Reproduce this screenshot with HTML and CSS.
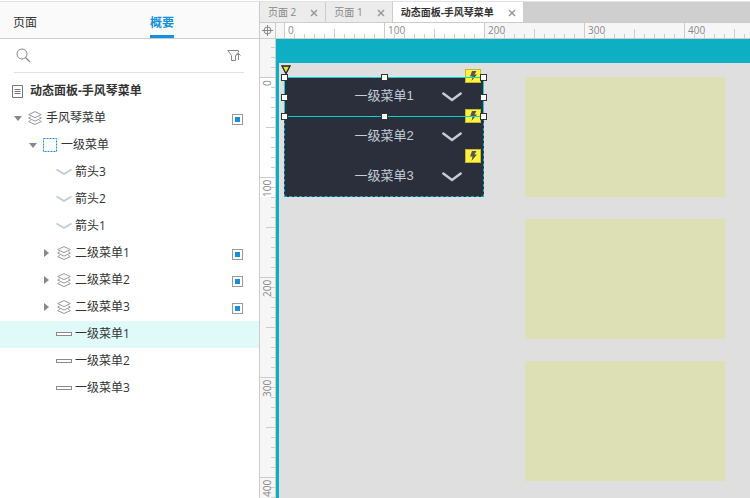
FILE: index.html
```html
<!DOCTYPE html>
<html lang="zh-CN">
  <head>
    <meta charset="UTF-8" />
    <title>动态面板-手风琴菜单</title>
    <link rel="stylesheet" href="styles.css">
  </head>
  <body>
    <!-- shared icons -->
    <svg class="sprite" width="0" height="0">
      <symbol id="layers" viewBox="0 0 14 14">
        <path d="M7 .6 13.300 3.600 7 6.600.7 3.600ZM2.700 5.900.7 7.100 7 10.100l6.300-3-2-1.200M2.700 9.400l-2 1.200L7 13.500l6.300-2.900-2-1.200" fill="none" stroke="#999" />
      </symbol>
      <symbol id="arrow" viewBox="0 0 16 8">
        <path d="M.5 1.500 8 6l7.500-4.500" fill="none" stroke="#bccadb" stroke-width="1.800" />
      </symbol>
      <symbol id="chevron" viewBox="0 0 20 10">
        <path d="M1.300 1.500 10 8l8.700-6.500" fill="none" stroke="#c3ccd9" stroke-width="2.400" stroke-linecap="round" />
      </symbol>
      <symbol id="close" viewBox="0 0 8 8">
        <path d="m1 1 6 6M7 1 1 7" fill="none" stroke="#999" stroke-width="1.500" />
      </symbol>
      <symbol id="bolt" viewBox="0 0 14 12">
        <path d="M6 1h4.500L8.500 4.500H11L5.500 11l1-4.500H4Z" fill="#555" />
      </symbol>
    </svg>

    <aside class="sidebar">
      <nav class="panel-tabs">
        <button class="panel-tab">页面</button>
        <button class="panel-tab active">概要</button>
      </nav>
      <div class="search">
        <label for="buscar" class="search-icon" aria-label="搜索">
          <svg width="16" height="16" viewBox="0 0 16 16"><circle cx="6" cy="6" r="5" fill="none" stroke="#888" /><path d="m9.500 9.500 4.500 4.500" stroke="#888" stroke-width="1.200" /></svg>
        </label>
        <input type="text" id="buscar" class="search-input">
        <button class="filter" aria-label="筛选">
          <svg width="15" height="13" viewBox="0 0 15 13"><path d="M11.500 3V1.500H.8L4.500 6.500v5h4v-5L11.500 3M11.500 11V4.500M9.500 6.500l2-2 2 2" fill="none" stroke="#888" /></svg>
        </button>
      </div>
      <ul class="tree">
        <li class="row root">
          <svg width="11" height="13" viewBox="0 0 11 13"><path d="M.5.5h10v12H.5ZM2.500 4.500h6M2.500 6.500h6M2.500 8.500h6" fill="none" stroke="#777" /></svg>
          <span>动态面板-手风琴菜单</span>
        </li>
        <li class="row level1">
          <i class="caret open"></i>
          <svg class="icon" width="14" height="14"><use href="#layers" /></svg>
          <span>手风琴菜单</span>
          <input type="checkbox" class="visible" aria-label="手风琴菜单" checked>
        </li>
        <li class="row level2">
          <i class="caret open"></i>
          <svg class="icon" width="14" height="14" viewBox="0 0 14 14"><rect x=".5" y=".5" width="13" height="13" fill="none" stroke="#1a8fdc" stroke-dasharray="2 1" /></svg>
          <span>一级菜单</span>
        </li>
        <li class="row leaf"><svg class="shape" width="16" height="8"><use href="#arrow" /></svg><span>箭头3</span></li>
        <li class="row leaf"><svg class="shape" width="16" height="8"><use href="#arrow" /></svg><span>箭头2</span></li>
        <li class="row leaf"><svg class="shape" width="16" height="8"><use href="#arrow" /></svg><span>箭头1</span></li>
        <li class="row level3">
          <i class="caret"></i>
          <svg class="icon" width="14" height="14"><use href="#layers" /></svg>
          <span>二级菜单1</span>
          <input type="checkbox" class="visible" aria-label="二级菜单1" checked>
        </li>
        <li class="row level3">
          <i class="caret"></i>
          <svg class="icon" width="14" height="14"><use href="#layers" /></svg>
          <span>二级菜单2</span>
          <input type="checkbox" class="visible" aria-label="二级菜单2" checked>
        </li>
        <li class="row level3">
          <i class="caret"></i>
          <svg class="icon" width="14" height="14"><use href="#layers" /></svg>
          <span>二级菜单3</span>
          <input type="checkbox" class="visible" aria-label="二级菜单3" checked>
        </li>
        <li class="row leaf selected"><i class="bar"></i><span>一级菜单1</span></li>
        <li class="row leaf"><i class="bar"></i><span>一级菜单2</span></li>
        <li class="row leaf"><i class="bar"></i><span>一级菜单3</span></li>
      </ul>
    </aside>

    <main class="editor">
      <div class="tabs">
        <div class="tab"><button class="tab-name">页面 2</button><button class="tab-close" aria-label="关闭"><svg width="8" height="8"><use href="#close" /></svg></button></div>
        <div class="tab"><button class="tab-name">页面 1</button><button class="tab-close" aria-label="关闭"><svg width="8" height="8"><use href="#close" /></svg></button></div>
        <div class="tab current"><button class="tab-name">动态面板-手风琴菜单</button><button class="tab-close" aria-label="关闭"><svg width="8" height="8"><use href="#close" /></svg></button></div>
      </div>
      <div class="workspace">
        <div class="corner">
          <svg width="11" height="11" viewBox="0 0 11 11"><circle cx="5.500" cy="5.500" r="3.500" fill="none" stroke="#888" /><path d="M5.500 0v11M0 5.500h11" stroke="#888" /></svg>
        </div>
        <div class="ruler-x">
          <span>0</span><span>100</span><span>200</span><span>300</span><span>400</span>
        </div>
        <div class="ruler-y">
          <span>0</span><span>100</span><span>200</span><span>300</span><span>400</span>
        </div>
        <div class="canvas">
          <div class="menu">
            <div class="item">一级菜单1<svg class="chevron" width="20" height="10"><use href="#chevron" /></svg><b class="event"><svg width="14" height="12"><use href="#bolt" /></svg></b></div>
            <div class="item">一级菜单2<svg class="chevron" width="20" height="10"><use href="#chevron" /></svg><b class="event"><svg width="14" height="12"><use href="#bolt" /></svg></b></div>
            <div class="item">一级菜单3<svg class="chevron" width="20" height="10"><use href="#chevron" /></svg><b class="event"><svg width="14" height="12"><use href="#bolt" /></svg></b></div>
            <svg class="marker" width="10" height="10" viewBox="0 0 10 10"><path d="M1 1h8L5 8.500Z" fill="#e6df36" stroke="#222" stroke-width="1.300" /></svg>
            <div class="selection">
              <i class="handle n w"></i><i class="handle n"></i><i class="handle n e"></i>
              <i class="handle w"></i><i class="handle e"></i>
              <i class="handle s w"></i><i class="handle s"></i><i class="handle s e"></i>
            </div>
          </div>
          <div class="states">
            <div class="state"></div>
            <div class="state"></div>
            <div class="state"></div>
          </div>
        </div>
      </div>
    </main>
  </body>
</html>
```
FILE: styles.css
```css
* {
  box-sizing: border-box;
}

body {
  margin: 0;
  height: 100vh;
  display: flex;
  overflow: hidden;
  background-color: #fff;
  color: #333;
  font-family: "Open Sans", "Noto Sans CJK SC", sans-serif;
  font-size: 12px;
  line-height: 18px;
}

button {
  margin: 0;
  padding: 0;
  border: 0;
  background: none;
  color: inherit;
  font: inherit;
}

svg {
  display: block;
  flex: none;
}

.sprite {
  position: absolute;
}

/* left panel */

.sidebar {
  flex: 0 0 260px;
  margin-top: 1px;
  border-top: 1px solid #e2e2e2;
  border-right: 1px solid #ccc;
}

.panel-tabs {
  display: flex;
  justify-content: space-between;
  height: 37px;
  padding: 0 85px 0 13px;
  background-color: #fafafa;
  border-bottom: 1px solid #ccc;
}

.panel-tab {
  padding-top: 8px;
  border-bottom: 3px solid transparent;
}

.panel-tab.active {
  color: #1490de;
  font-weight: bold;
  border-color: #1490de;
}

.search {
  display: flex;
  align-items: center;
  height: 34px;
  margin: 0 15px 5px 14px;
  padding: 0 2px;
  border-bottom: 1px solid #e2e2e2;
}

.search-input {
  flex: 1;
  min-width: 0;
  border: 0;
  outline: 0;
  background: none;
  font: inherit;
}

.tree {
  margin: 0;
  padding: 0;
  list-style: none;
}

.row {
  display: flex;
  align-items: center;
  height: 27px;
  padding-right: 16px;
  padding-bottom: 1px;
}

.root {
  padding-left: 12px;
  gap: 7px;
  font-weight: bold;
}

.level1 {
  padding-left: 14px;
}

.level2 {
  padding-left: 29px;
}

.level3 {
  padding-left: 44px;
}

.leaf {
  padding-left: 56px;
  gap: 3px;
}

.selected {
  background-color: #e0fafa;
}

.caret {
  width: 5px;
  margin-right: 8px;
  border: 4px solid transparent;
  border-left: 5px solid #888;
  border-right: 0;
}

.caret.open {
  width: 7px;
  margin-right: 6px;
  border: 4px solid transparent;
  border-top: 5px solid #888;
  border-bottom: 0;
}

.icon {
  margin-right: 4px;
}

.bar {
  width: 16px;
  height: 4px;
  border: 1px solid #8a8a8a;
  background-color: #fff;
}

.visible {
  appearance: none;
  width: 11px;
  height: 11px;
  margin: 3px 0 0 auto;
  padding: 2px;
  border: 1px solid #999;
  background-color: #1490de;
  background-clip: content-box;
}

/* editor */

.editor {
  flex: 1;
  min-width: 0;
  display: flex;
  flex-direction: column;
  margin-top: 1px;
  border-top: 1px solid #e2e2e2;
}

.tabs {
  display: flex;
  height: 21px;
  background-color: #cfcfcf;
  border-bottom: 1px solid #ccc;
}

.tab {
  display: flex;
  align-items: center;
  gap: 14px;
  padding: 0 7px 0 8px;
  background-color: #ececec;
  border-right: 1px solid #ccc;
  color: #888;
  font-size: 10px;
  white-space: nowrap;
}

.tab.current {
  background-color: #fff;
  border-right: 0;
  color: #333;
  font-weight: bold;
}

.tab-close {
  padding-top: 2px;
}

.workspace {
  flex: 1;
  min-height: 0;
  display: grid;
  grid-template-columns: 16px 1fr;
  grid-template-rows: 16px 1fr;
}

.corner {
  display: flex;
  align-items: center;
  justify-content: center;
  background-color: #f6f6f6;
  border-right: 1px solid #ccc;
  border-bottom: 1px solid #ccc;
}

.ruler-x,
.ruler-y {
  display: flex;
  overflow: hidden;
  background-color: #f6f6f6;
  color: #888;
  font-size: 10px;
  line-height: 15px;
}

.ruler-x span,
.ruler-y span {
  flex: 0 0 100px;
}

/* ticks: every 100, 50 and 10, then the selected range in white */
.ruler-x {
  padding-left: 8px;
  border-bottom: 1px solid #ccc;
  background-image:
    linear-gradient(to right, #ccc 1px, transparent 1px),
    linear-gradient(to right, #ccc 1px, transparent 1px),
    linear-gradient(to right, #ccc 1px, transparent 1px),
    linear-gradient(#fff, #fff);
  background-size: 100px 100%, 50px 9px, 10px 4px, 200px 100%;
  background-position: 8px 0, 8px bottom, 8px bottom, 8px 0;
  background-repeat: repeat-x, repeat-x, repeat-x, no-repeat;
}

.ruler-x span {
  padding-left: 4px;
}

.ruler-y {
  flex-direction: column;
  padding-top: 38px;
  border-right: 1px solid #ccc;
  background-image:
    linear-gradient(#ccc 1px, transparent 1px),
    linear-gradient(#ccc 1px, transparent 1px),
    linear-gradient(#ccc 1px, transparent 1px),
    linear-gradient(#fff, #fff);
  background-size: 100% 100px, 9px 50px, 4px 10px, 100% 120px;
  background-position: 0 38px, right 38px, right 38px, 0 38px;
  background-repeat: repeat-y, repeat-y, repeat-y, no-repeat;
}

.ruler-y span {
  padding-bottom: 3px;
  writing-mode: vertical-rl;
  transform: rotate(180deg);
  text-align: right;
}

.canvas {
  display: flex;
  align-items: flex-start;
  gap: 41px;
  min-width: 0;
  padding: 14px 5px;
  overflow: hidden;
  background-color: #dfdfdf;
  border-top: 24px solid #0fafc3;
  border-left: 3px solid #0fafc3;
}

.menu {
  position: relative;
  flex: 0 0 200px;
  background-color: #2b2f3b;
  outline: 1px dashed #0fafc3;
  outline-offset: -1px;
}

.item {
  position: relative;
  display: flex;
  align-items: center;
  justify-content: center;
  height: 40px;
  padding-bottom: 3px;
  color: #c3ccd9;
  font-family: "Liberation Sans", "Noto Sans CJK SC", sans-serif;
  font-size: 13px;
}

.chevron {
  position: absolute;
  right: 22px;
  top: 15px;
}

.event {
  position: absolute;
  right: 3px;
  top: -8px;
  border: 1px solid #c2b92c;
  background-color: #fff23c;
}

.marker {
  position: absolute;
  left: -3px;
  top: -12px;
}

.selection {
  position: absolute;
  inset: 0 0 auto 0;
  height: 40px;
  box-shadow: inset 0 0 0 1px #00d5d5;
}

.handle {
  position: absolute;
  left: 50%;
  top: 50%;
  width: 7px;
  height: 7px;
  margin: -3px;
  border: 1px solid #333;
  background-color: #fff;
}

.handle.n {
  top: 0;
}

.handle.s {
  top: calc(100% - 1px);
}

.handle.w {
  left: 0;
}

.handle.e {
  left: calc(100% - 1px);
}

/* repeated panels on the right */
.states {
  display: grid;
  gap: 22px;
}

.state {
  width: 200px;
  height: 120px;
  background-color: #dddfb5;
}
```
